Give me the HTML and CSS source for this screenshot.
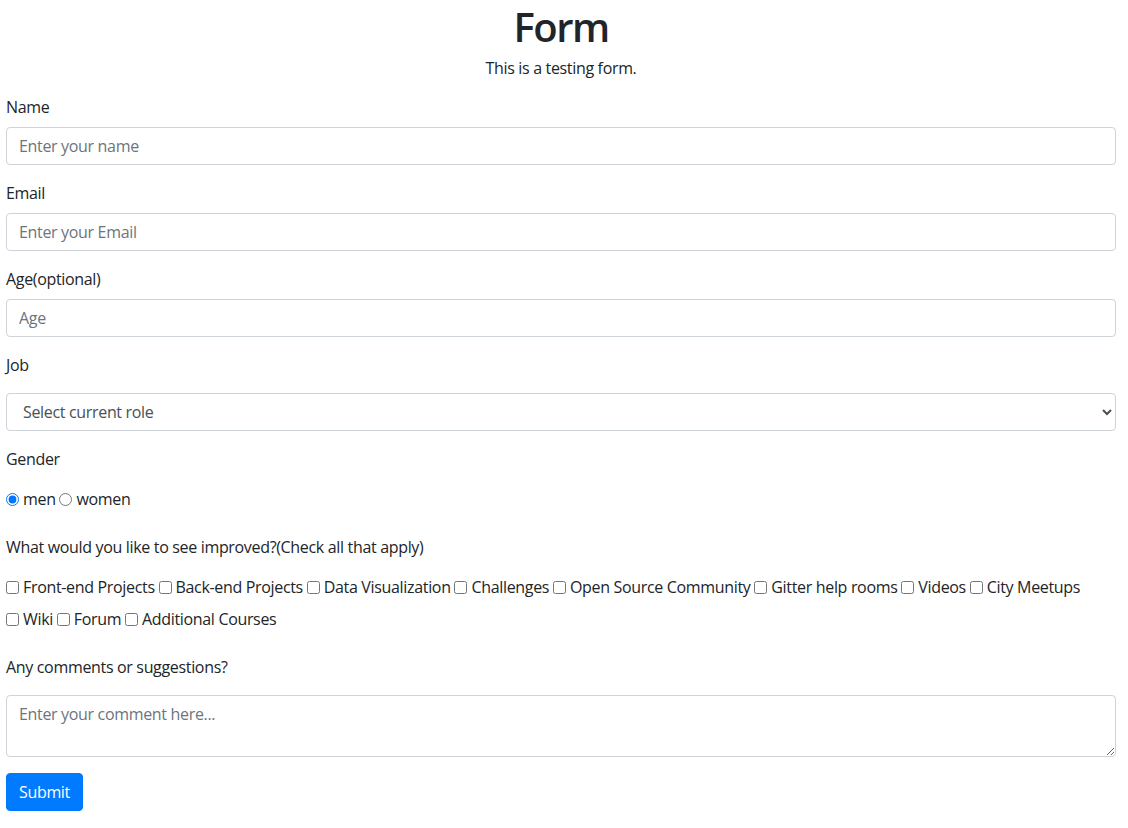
FILE: index.html
```html
<!DOCTYPE html>
<html lang="en">
<head>
<meta charset="utf-8">
<title>Form</title>
<link rel="stylesheet" href="styles.css">
</head>
<body>
<div class="page">
  <h1 class="title">Form</h1>
  <p class="subtitle">This is a testing form.</p>
  <form class="survey">
    <div class="group">
      <label class="label" for="name">Name</label>
      <input class="control" id="name" type="text" placeholder="Enter your name">
    </div>
    <div class="group">
      <label class="label" for="email">Email</label>
      <input class="control" id="email" type="email" placeholder="Enter your Email">
    </div>
    <div class="group">
      <label class="label" for="age">Age(optional)</label>
      <input class="control" id="age" type="number" placeholder="Age">
    </div>
    <div class="group">
      <label class="label label-select" for="job">Job</label>
      <select class="control select" id="job">
        <option>Select current role</option>
        <option>Student</option>
        <option>Full time job</option>
        <option>Other</option>
      </select>
    </div>
    <div class="group">
      <div class="label label-gap">Gender</div>
      <div class="choices radios">
        <label class="choice"><input type="radio" name="gender" checked>men</label>
        <label class="choice"><input type="radio" name="gender">women</label>
      </div>
    </div>
    <div class="group-plain">
      <div class="label label-gap">What would you like to see improved?(Check all that apply)</div>
      <div class="choices checks">
        <label class="choice"><input type="checkbox">Front-end Projects</label>
        <label class="choice"><input type="checkbox">Back-end Projects</label>
        <label class="choice"><input type="checkbox">Data Visualization</label>
        <label class="choice"><input type="checkbox">Challenges</label>
        <label class="choice"><input type="checkbox">Open Source Community</label>
        <label class="choice"><input type="checkbox">Gitter help rooms</label>
        <label class="choice"><input type="checkbox">Videos</label>
        <label class="choice"><input type="checkbox">City Meetups</label><br>
        <label class="choice"><input type="checkbox">Wiki</label>
        <label class="choice"><input type="checkbox">Forum</label>
        <label class="choice"><input type="checkbox">Additional Courses</label>
      </div>
    </div>
    <div class="group comments">
      <label class="label label-gap" for="comment">Any comments or suggestions?</label>
      <textarea class="control area" id="comment" rows="2" placeholder="Enter your comment here..."></textarea>
    </div>
    <button class="submit" type="submit">Submit</button>
  </form>
</div>
</body>
</html>
```

FILE: styles.css
```css
* { box-sizing: border-box; }

html, body {
  margin: 0;
  background: #fff;
}

body {
  font-family: "Segoe UI", "Open Sans", "Noto Sans", sans-serif;
  font-size: 16px;
  line-height: 24px;
  letter-spacing: -0.33px;
  color: #212529;
}

.page {
  padding: 0 12px 0 6px;
}

.title {
  margin: 0 0 2px;
  padding: 0;
  font-size: 40px;
  line-height: 54px;
  font-weight: 600;
  letter-spacing: -1.5px;
  text-align: center;
}

.subtitle {
  margin: 0 0 15px;
  text-align: center;
}

.group {
  margin-bottom: 16px;
}

.group-plain {
  margin-bottom: 20px;
}

.label {
  display: block;
  margin-bottom: 8px;
}

.label-select,
.label-gap {
  margin-bottom: 16px;
}

.control {
  display: block;
  width: 100%;
  height: 38px;
  padding: 6px 12px;
  font: inherit;
  letter-spacing: inherit;
  line-height: 24px;
  color: #495057;
  background: #fff;
  border: 1px solid #ced4da;
  border-radius: 4px;
  outline: none;
}

.control::placeholder {
  color: #6c757d;
  opacity: 1;
}

.select {
  padding: 6px 12px 6px 12px;
}

.area {
  height: 62px;
  resize: vertical;
}

.radios {
  margin-bottom: 24px;
}

.checks {
  line-height: 32px;
  margin-top: -4px;
  white-space: nowrap;
}

.choice {
  white-space: nowrap;
}

.choice input {
  margin: 0 4px 0 0;
  width: 13px;
  height: 13px;
  vertical-align: -1px;
}

.submit {
  display: inline-block;
  height: 38px;
  padding: 6px 12px;
  font: inherit;
  letter-spacing: inherit;
  line-height: 24px;
  color: #fff;
  background: #007bff;
  border: 1px solid #007bff;
  border-radius: 4px;
}
```
